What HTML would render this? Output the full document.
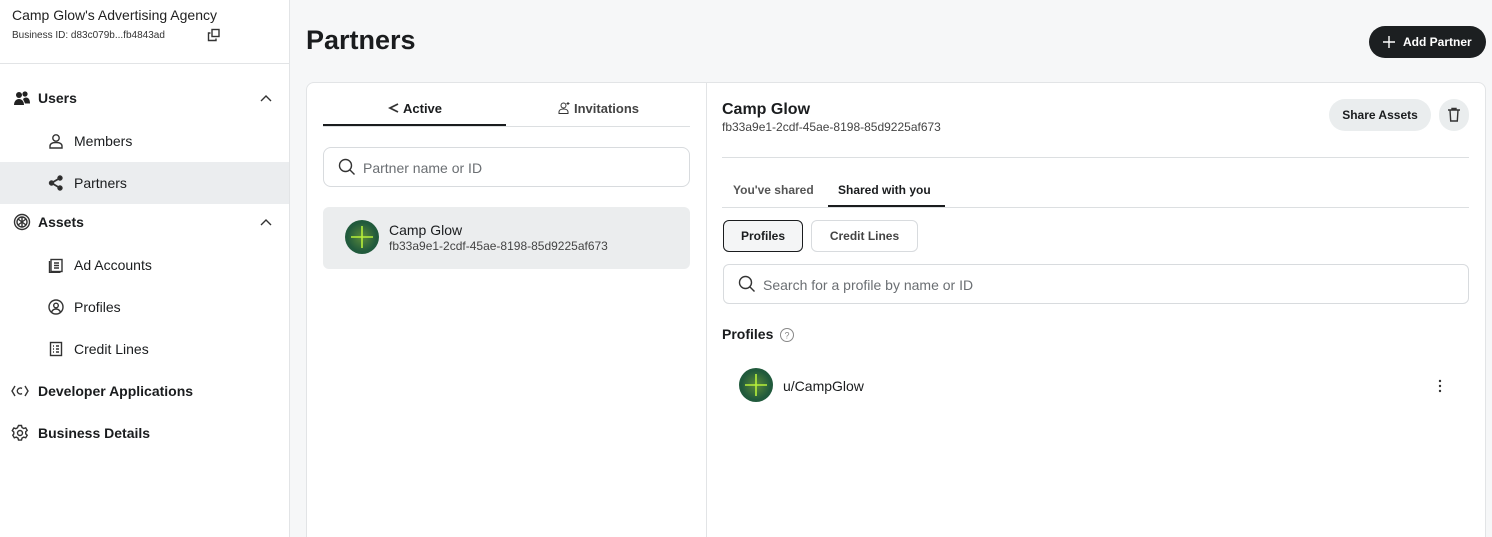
<!DOCTYPE html>
<html><head><meta charset="utf-8"><style>
*{box-sizing:border-box;margin:0;padding:0}
html,body{width:1492px;height:537px;overflow:hidden}
body{font-family:"Liberation Sans",sans-serif;color:#1a1c1e;background:#f6f7f8;position:relative}
.abs{position:absolute}
.sb{left:0;top:0;width:290px;height:537px;background:#fff;border-right:1px solid #e2e4e6}
.ni{position:absolute;left:0;width:289px;height:42px;display:flex;align-items:center;font-size:14px}
.ni svg{position:absolute}
.b{font-weight:bold}
svg{fill:none;stroke:#333;stroke-width:1.4}
.av{position:absolute;width:34px;height:34px;border-radius:50%;background:#215a3c}
</style></head><body>
<div class="abs sb">
 <div class="abs" style="left:12px;top:7px;font-size:14px;color:#222">Camp Glow's Advertising Agency</div>
 <div class="abs" style="left:12px;top:30px;font-size:10px;color:#333">Business ID: d83c079b...fb4843ad</div>
 <svg class="abs" style="left:207px;top:28px" width="14" height="14" viewBox="0 0 14 14"><rect x="5" y="1.5" width="7" height="7"/><path d="M3.5 5H1.5v7.5H9V10.5"/></svg>
 <div class="abs" style="left:0;top:63px;width:289px;border-top:1px solid #e2e4e6"></div>
 <div class="ni b" style="top:77px"><svg style="left:13px" width="18" height="16" viewBox="0 0 18 16"><circle cx="6" cy="5" r="3" fill="#222" stroke="none"/><circle cx="12" cy="4" r="2.6" fill="#222" stroke="none"/><path d="M1 15c0-4 2.5-6 5-6s5 2 5 6z" fill="#222" stroke="none"/><path d="M10 9c1-1 2-1.5 3-1.5 2.5 0 4 2 4 6h-5z" fill="#222" stroke="none"/></svg><span style="position:absolute;left:38px">Users</span><svg style="left:260px" width="12" height="8" viewBox="0 0 12 8"><path d="M1 7l5-5 5 5"/></svg></div>
 <div class="ni" style="top:120px"><svg style="left:48px" width="16" height="16" viewBox="0 0 16 16"><circle cx="8" cy="5" r="3.2"/><path d="M2 15v-2c0-2 2-3.5 6-3.5s6 1.5 6 3.5v2z"/></svg><span style="position:absolute;left:74px">Members</span></div>
 <div class="ni" style="top:162px;background:#ebedef"><svg style="left:48px" width="16" height="16" viewBox="0 0 16 16"><circle cx="12" cy="3" r="2" fill="#222"/><circle cx="3.5" cy="8" r="2" fill="#222"/><circle cx="12" cy="13" r="2" fill="#222"/><path d="M12 3L3.5 8l8.5 5" stroke-width="1.8"/></svg><span style="position:absolute;left:74px">Partners</span></div>
 <div class="ni b" style="top:201px"><svg style="left:13px" width="18" height="18" viewBox="0 0 18 18"><circle cx="9" cy="9" r="7.5"/><circle cx="9" cy="9" r="5"/><path d="M5 6l8 6M5 12l8-6M9 4v10"/></svg><span style="position:absolute;left:38px">Assets</span><svg style="left:260px" width="12" height="8" viewBox="0 0 12 8"><path d="M1 7l5-5 5 5"/></svg></div>
 <div class="ni" style="top:244px"><svg style="left:48px" width="16" height="16" viewBox="0 0 16 16"><rect x="3" y="2.5" width="11" height="12"/><path d="M1.5 4v11.5h11M6 6h5M6 8.5h5M6 11h5"/></svg><span style="position:absolute;left:74px">Ad Accounts</span></div>
 <div class="ni" style="top:286px"><svg style="left:48px" width="16" height="16" viewBox="0 0 16 16"><circle cx="8" cy="8" r="7"/><circle cx="8" cy="6.5" r="2.3"/><path d="M3.5 13c1-2 2.5-3 4.5-3s3.5 1 4.5 3"/></svg><span style="position:absolute;left:74px">Profiles</span></div>
 <div class="ni" style="top:328px"><svg style="left:48px" width="16" height="16" viewBox="0 0 16 16"><rect x="2.5" y="1.5" width="11" height="13"/><path d="M5 5h1M8 5h3M5 8h1M8 8h3M5 11h1M8 11h3"/></svg><span style="position:absolute;left:74px">Credit Lines</span></div>
 <div class="ni b" style="top:370px"><svg style="left:11px" width="18" height="16" viewBox="0 0 18 16"><path d="M4 3L1 8l3 5M14 3l3 5-3 5M11 5.5a3 3 0 1 0 0 5"/></svg><span style="position:absolute;left:38px">Developer Applications</span></div>
 <div class="ni b" style="top:412px"><svg style="left:11px" width="18" height="18" viewBox="0 0 18 18"><circle cx="9" cy="9" r="2.5"/><path d="M7.5 1.5h3l.5 2 1.7 1 2-.7 1.5 2.6-1.5 1.4v2l1.5 1.4-1.5 2.6-2-.7-1.7 1-.5 2h-3l-.5-2-1.7-1-2 .7-1.5-2.6L2.8 10V8L1.3 6.6l1.5-2.6 2 .7 1.7-1z"/></svg><span style="position:absolute;left:38px">Business Details</span></div>
</div>

<div class="abs b" style="left:306px;top:25px;font-size:27px;color:#1a1c1e">Partners</div>
<div class="abs" style="left:1369px;top:26px;width:117px;height:32px;border-radius:16px;background:#1c1f21;color:#fff;font-size:12px;font-weight:bold;display:flex;align-items:center">
 <svg style="position:absolute;left:13px;stroke:#fff" width="14" height="14" viewBox="0 0 14 14"><path d="M7 1v12M1 7h12"/></svg><span style="position:absolute;left:34px">Add Partner</span></div>

<div class="abs" style="left:306px;top:82px;width:1180px;height:470px;background:#fff;border:1px solid #e2e4e6;border-radius:8px"></div>
<div class="abs" style="left:706px;top:83px;height:460px;border-left:1px solid #e2e4e6"></div>

<div class="abs" style="left:323px;top:126px;width:367px;border-top:1px solid #dcdfe1"></div>
<div class="abs" style="left:323px;top:124px;width:183px;border-top:2px solid #1a1c1e"></div>
<svg class="abs" style="left:388px;top:102px" width="12" height="12" viewBox="0 0 12 12"><path d="M10 2L2 6l8 4" stroke-width="1.8"/></svg>
<div class="abs b" style="left:403px;top:101px;font-size:13px">Active</div>
<svg class="abs" style="left:558px;top:101px" width="13" height="13" viewBox="0 0 13 13"><circle cx="5.5" cy="4.5" r="2.5" stroke-width="1"/><path d="M1 12.5v-1.5c0-2 2-3 4.5-3s4.5 1 4.5 3v1.5zM10 1v3M8.5 2.5h3" stroke-width="1"/></svg>
<div class="abs b" style="left:574px;top:101px;font-size:13px;color:#444">Invitations</div>
<div class="abs" style="left:323px;top:147px;width:367px;height:40px;border:1px solid #d8dbde;border-radius:8px"></div>
<svg class="abs" style="left:338px;top:158px" width="18" height="18" viewBox="0 0 18 18"><circle cx="7.5" cy="7.5" r="6"/><path d="M12 12l4.5 4.5"/></svg>
<div class="abs" style="left:363px;top:160px;font-size:14px;color:#6b6f73">Partner name or ID</div>
<div class="abs" style="left:323px;top:207px;width:367px;height:62px;background:#ebedee;border-radius:6px"></div>
<div class="av" style="left:345px;top:220px;background:radial-gradient(circle,#5b8a3a 0,#215a3c 60%)"><svg width="34" height="34" viewBox="0 0 34 34" style="stroke:#b8f03a;stroke-width:1.6"><path d="M17 6v22M6 17h22"/></svg></div>
<div class="abs" style="left:389px;top:222px;font-size:14px">Camp Glow</div>
<div class="abs" style="left:389px;top:239px;font-size:12px;color:#444">fb33a9e1-2cdf-45ae-8198-85d9225af673</div>

<div class="abs b" style="left:722px;top:101px;font-size:16px">Camp Glow</div>
<div class="abs" style="left:722px;top:120px;font-size:12px;color:#444">fb33a9e1-2cdf-45ae-8198-85d9225af673</div>
<div class="abs b" style="left:1329px;top:99px;width:102px;height:32px;border-radius:16px;background:#eaedee;font-size:12px;display:flex;align-items:center;justify-content:center">Share Assets</div>
<div class="abs" style="left:1439px;top:99px;width:30px;height:32px;border-radius:16px;background:#eaedee"></div>
<svg class="abs" style="left:1447px;top:107px" width="14" height="16" viewBox="0 0 14 16"><path d="M1 3h12M5 3V1.5h4V3M3 3l.7 11h6.6L11 3"/></svg>
<div class="abs" style="left:722px;top:157px;width:747px;border-top:1px solid #dcdfe1"></div>
<div class="abs b" style="left:733px;top:183px;font-size:12px;color:#555">You've shared</div>
<div class="abs b" style="left:838px;top:183px;font-size:12px">Shared with you</div>
<div class="abs" style="left:722px;top:207px;width:747px;border-top:1px solid #dcdfe1"></div>
<div class="abs" style="left:828px;top:205px;width:117px;border-top:2px solid #1a1c1e"></div>
<div class="abs b" style="left:723px;top:220px;width:80px;height:32px;border:1px solid #1a1c1e;border-radius:6px;background:#f4f5f6;font-size:12px;display:flex;align-items:center;justify-content:center">Profiles</div>
<div class="abs b" style="left:811px;top:220px;width:107px;height:32px;border:1px solid #d8dbde;border-radius:6px;font-size:12px;color:#444;display:flex;align-items:center;justify-content:center">Credit Lines</div>
<div class="abs" style="left:723px;top:264px;width:746px;height:40px;border:1px solid #d8dbde;border-radius:6px"></div>
<svg class="abs" style="left:738px;top:275px" width="18" height="18" viewBox="0 0 18 18"><circle cx="7.5" cy="7.5" r="6"/><path d="M12 12l4.5 4.5"/></svg>
<div class="abs" style="left:763px;top:277px;font-size:14px;color:#6b6f73">Search for a profile by name or ID</div>
<div class="abs b" style="left:722px;top:326px;font-size:14px">Profiles</div>
<svg class="abs" style="left:779px;top:327px" width="16" height="16" viewBox="0 0 16 16"><circle cx="8" cy="8" r="6.5" stroke="#888" stroke-width="1"/><text x="8" y="11.5" font-size="9" text-anchor="middle" fill="#888" stroke="none" font-family="Liberation Sans">?</text></svg>
<div class="av" style="left:739px;top:368px;background:radial-gradient(circle,#5b8a3a 0,#215a3c 60%)"><svg width="34" height="34" viewBox="0 0 34 34" style="stroke:#b8f03a;stroke-width:1.6"><path d="M17 6v22M6 17h22"/></svg></div>
<div class="abs" style="left:783px;top:378px;font-size:14px">u/CampGlow</div>
<svg class="abs" style="left:1436px;top:378px" width="8" height="16" viewBox="0 0 8 16"><circle cx="4" cy="3" r="1.2" fill="#333" stroke="none"/><circle cx="4" cy="8" r="1.2" fill="#333" stroke="none"/><circle cx="4" cy="13" r="1.2" fill="#333" stroke="none"/></svg>
</body></html>
